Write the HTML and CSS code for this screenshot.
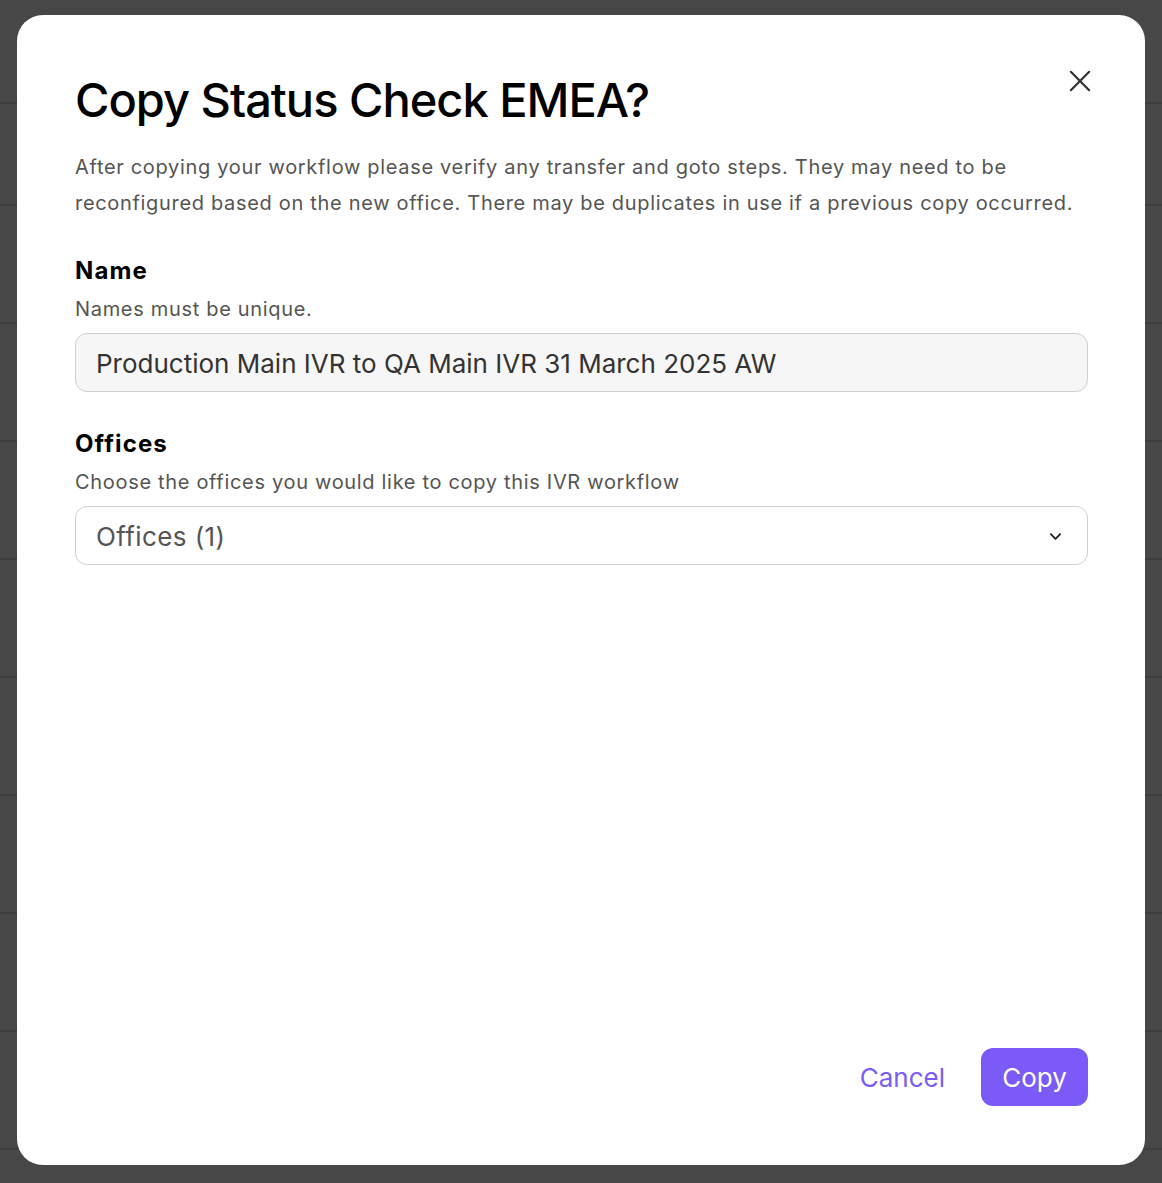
FILE: index.html
```html
<!DOCTYPE html>
<html lang="en">
<head>
<meta charset="utf-8">
<title>Copy Status Check EMEA?</title>
<link rel="stylesheet" href="styles.css">
</head>
<body>
<div class="page">
  <div class="row row-first"></div>
  <div class="row row-second"></div>
  <div class="row"></div>
  <div class="row"></div>
  <div class="row"></div>
  <div class="row"></div>
  <div class="row"></div>
  <div class="row"></div>
  <div class="row"></div>
  <div class="row"></div>
</div>
<div class="overlay">
  <div class="modal" role="dialog" aria-labelledby="dlg-title">
    <div class="modal-head">
      <h1 id="dlg-title" class="title">Copy Status Check EMEA?</h1>
      <button class="close" aria-label="Close">
        <svg width="24" height="24" viewBox="0 0 24 24" fill="none" stroke="#333" stroke-width="2.4" stroke-linecap="round">
          <path d="M2 2 L22 22 M22 2 L2 22"/>
        </svg>
      </button>
    </div>
    <p class="intro">After copying your workflow please verify any transfer and goto steps. They may need to be reconfigured based on the new office. There may be duplicates in use if a previous copy occurred.</p>

    <div class="field field-name">
      <div class="label">Name</div>
      <div class="hint">Names must be unique.</div>
      <div class="input">Production Main IVR to QA Main IVR 31 March 2025 AW</div>
    </div>

    <div class="field field-offices">
      <div class="label">Offices</div>
      <div class="hint">Choose the offices you would like to copy this IVR workflow</div>
      <div class="select">
        <span class="select-value">Offices (1)</span>
        <svg class="chev" width="14" height="9" viewBox="0 0 14 9" fill="none" stroke="#222" stroke-width="2" stroke-linecap="round" stroke-linejoin="round">
          <path d="M2 2 L7 7 L12 2"/>
        </svg>
      </div>
    </div>

    <div class="footer">
      <button class="btn-cancel">Cancel</button>
      <button class="btn-copy">Copy</button>
    </div>
  </div>
</div>
</body>
</html>
```

FILE: styles.css
```css
* { box-sizing: border-box; }
html, body {
  margin: 0;
  padding: 0;
  height: 100%;
  background: #474747;
  font-family: Inter, "Noto Sans", "Liberation Sans", sans-serif;
}
.page {
  display: flex;
  flex-direction: column;
}
.row {
  height: 118px;
  border-bottom: 2px solid #3d3d3d;
  flex: none;
}
.row-first { height: 104px; }
.row-second { height: 102px; }

.overlay {
  position: fixed;
  inset: 0;
  padding: 15px 17px 18px 17px;
  display: flex;
}
.modal {
  flex: 1;
  background: #ffffff;
  border-radius: 26px;
  padding: 56px 57px 59px 58px;
  display: flex;
  flex-direction: column;
}
.modal-head {
  display: flex;
  justify-content: space-between;
  align-items: flex-start;
}
.title {
  margin: 0;
  font-size: 47px;
  font-weight: 500;
  line-height: 57px;
  color: #000;
  letter-spacing: -1px;
}
.close {
  background: none;
  border: 0;
  padding: 0;
  margin: -4px -6px 0 0;
  width: 28px;
  height: 28px;
  display: flex;
  align-items: center;
  justify-content: center;
  cursor: pointer;
}
.close svg { width: 22px; height: 22px; }

.intro {
  margin: 22px 0 0 0;
  font-size: 20px;
  line-height: 35.5px;
  color: #555555;
  letter-spacing: 0.68px;
}
.field { display: flex; flex-direction: column; }
.field-name { margin-top: 35px; }
.field-offices { margin-top: 37px; }
.label {
  font-size: 24px;
  font-weight: 700;
  line-height: 30px;
  color: #000;
  letter-spacing: 1.1px;
}
.hint {
  margin-top: 10px;
  font-size: 20px;
  line-height: 26px;
  color: #555555;
  letter-spacing: 0.68px;
}
.input, .select {
  margin-top: 11px;
  height: 59px;
  border: 1px solid #cfcfcf;
  border-radius: 12px;
  padding: 0 20px;
  font-size: 26px;
  display: flex;
  align-items: center;
  padding-top: 2px;
}
.input {
  background: #f6f6f6;
  color: #333333;
}
.select {
  background: #ffffff;
  color: #555555;
  justify-content: space-between;
  padding-right: 25px;
}
.select-value { letter-spacing: 0.4px; }
.chev { width: 13px; height: 9px; }

.footer {
  margin-top: auto;
  display: flex;
  justify-content: flex-end;
  align-items: center;
  gap: 36px;
}
.btn-cancel, .btn-copy {
  font-family: inherit;
  font-size: 26px;
  border: 0;
  cursor: pointer;
}
.btn-cancel {
  background: none;
  color: #7b5cf6;
  padding: 0;
}
.btn-copy {
  background: #7b5af8;
  color: #fff;
  height: 58px;
  width: 107px;
  border-radius: 12px;
  padding: 0;
}
```
